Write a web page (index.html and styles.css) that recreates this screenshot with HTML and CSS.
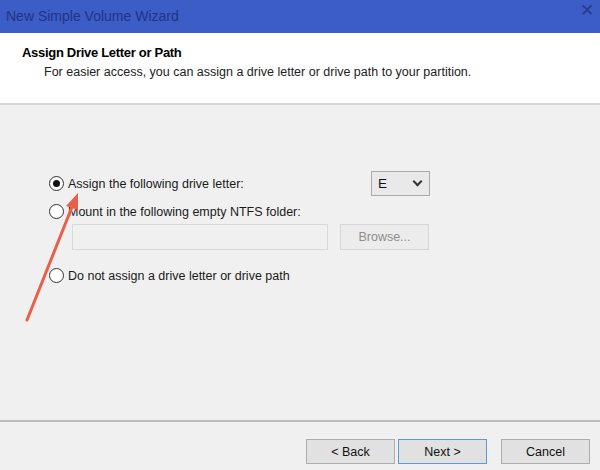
FILE: index.html
```html
<!DOCTYPE html>
<html lang="en">
<head>
  <meta charset="UTF-8" />
  <title>New Simple Volume Wizard</title>
  <link rel="stylesheet" href="styles.css">
</head>
<body>
  <div class="wizard">
    <div class="titlebar">
      <span class="title">New Simple Volume Wizard</span>
      <span class="close">&#x2715;</span>
    </div>

    <div class="header">
      <h1>Assign Drive Letter or Path</h1>
      <p>For easier access, you can assign a drive letter or drive path to your partition.</p>
    </div>

    <div class="content">
      <div class="row row-letter">
        <label class="option"><span class="radio checked"></span>Assign the following drive letter:</label>
        <div class="select">E<span class="chevron"></span></div>
      </div>
      <div class="row row-mount">
        <label class="option"><span class="radio"></span>Mount in the following empty NTFS folder:</label>
      </div>
      <div class="row row-folder">
        <div class="textbox"></div>
        <button class="btn disabled">Browse...</button>
      </div>
      <div class="row row-none">
        <label class="option"><span class="radio"></span>Do not assign a drive letter or drive path</label>
      </div>

      <!-- annotation arrow -->
      <svg class="arrow" width="80" height="150" viewBox="0 0 80 150">
        <line x1="7" y1="135" x2="52" y2="22" stroke="#e8604c" stroke-width="3" stroke-linecap="round" />
        <polygon points="58,8 46,21 58,25" fill="#e8604c" />
      </svg>
    </div>

    <div class="footer">
      <button class="btn">&lt; Back</button>
      <button class="btn default">Next &gt;</button>
      <button class="btn cancel">Cancel</button>
    </div>
  </div>
</body>
</html>
```

FILE: styles.css
```css
body {
  margin: 0;
  font-family: 'Liberation Sans', Arial, sans-serif;
  font-size: 12.5px;
  color: #111;
  background: #f0f0f0;
}

.wizard {
  width: 600px;
  height: 470px;
  display: flex;
  flex-direction: column;
  overflow: hidden;
}

.titlebar {
  height: 33px;
  background: #3c5cc6;
  display: flex;
  align-items: center;
  justify-content: space-between;
  padding: 0 6px 0 6px;
  flex-shrink: 0;
}

.title {
  color: #1f3585;
  font-size: 14px;
  margin-top: -2px;
}

.close {
  color: #253b8a;
  font-size: 17px;
  margin-top: -12px;
}

.header {
  height: 72px;
  background: #fff;
  border-bottom: 2px solid #d6d6d6;
  padding: 12px 0 0 22px;
  box-sizing: border-box;
  flex-shrink: 0;
}

.header h1 {
  margin: 0;
  font-size: 13px;
  letter-spacing: -0.3px;
  font-weight: bold;
  color: #000;
}

.header p {
  margin: 5px 0 0 22px;
  color: #222;
}

.content {
  flex: 1;
  position: relative;
  padding: 66px 0 0 49px;
  box-sizing: border-box;
  border-bottom: 2px solid #bdbdbd;
}

.row {
  display: flex;
  align-items: center;
}

.row-letter {
  width: 381px;
  justify-content: space-between;
}

.option {
  display: flex;
  align-items: center;
  gap: 4px;
  color: #1a1a1a;
}

.radio {
  width: 13px;
  height: 13px;
  border: 1px solid #333;
  border-radius: 50%;
  background: #fff;
  position: relative;
}

.radio.checked::after {
  content: "";
  position: absolute;
  left: 3px;
  top: 3px;
  width: 7px;
  height: 7px;
  border-radius: 50%;
  background: #111;
}

.select {
  width: 59px;
  height: 25px;
  border: 1px solid #aaa;
  background: #e9e9e9;
  box-sizing: border-box;
  display: flex;
  align-items: center;
  justify-content: space-between;
  padding: 0 8px 0 6px;
  font-size: 13.5px;
}

.chevron {
  width: 5px;
  height: 5px;
  border-right: 2px solid #333;
  border-bottom: 2px solid #333;
  transform: rotate(45deg);
  margin-top: -4px;
}

.row-mount {
  margin-top: 8px;
}

.row-folder {
  margin: 5px 0 0 23px;
  gap: 12px;
}

.textbox {
  width: 256px;
  height: 26px;
  border: 1px solid #d9d9d9;
  background: #f0f0f0;
  box-sizing: border-box;
}

.row-none {
  margin-top: 18px;
}

.btn {
  width: 89px;
  height: 25px;
  border: 1px solid #adadad;
  background: #e1e1e1;
  font-family: inherit;
  font-size: 12.5px;
  color: #111;
  padding: 0;
}

.btn.disabled {
  height: 26px;
  border-color: #d6d6d6;
  background: #ececec;
  color: #8c8c8c;
}

.btn.default {
  border-color: #5e9bd6;
}

.footer {
  height: 48px;
  flex-shrink: 0;
  display: flex;
  align-items: flex-start;
  justify-content: flex-end;
  padding: 17px 10px 0 0;
  box-sizing: border-box;
  gap: 3px;
}

.btn.cancel {
  margin-left: 11px;
}

.arrow {
  position: absolute;
  left: 20px;
  top: 80px;
}
```
